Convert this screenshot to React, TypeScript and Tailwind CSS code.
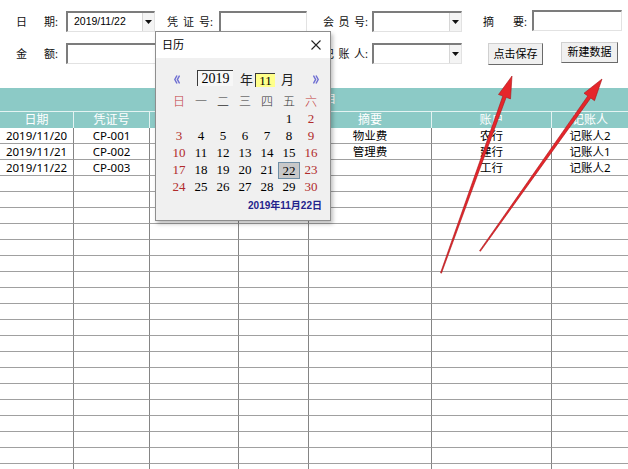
import React from "react";

const COLS = [74, 76, 89, 70, 123, 120, 76];

function Label({ chars, className }: { chars: string[]; className: string }) {
  return (
    <div className={`flex justify-between text-[11px] text-[#111] leading-none ${className}`}>
      {chars.map((c, i) => (
        <span key={i}>{c}</span>
      ))}
    </div>
  );
}

function TextBox({ className, children }: { className: string; children?: React.ReactNode }) {
  return (
    <div
      className={`h-[21px] bg-white border-t-2 border-l-2 border-r border-b border-t-[#7c7c7c] border-l-[#7c7c7c] border-r-[#e2e2e2] border-b-[#e2e2e2] flex items-center ${className}`}
    >
      {children}
    </div>
  );
}

function Combo({ className, value }: { className: string; value?: string }) {
  return (
    <TextBox className={className}>
      <span className="flex-1 pl-[6px] text-[10.5px] text-black font-['Liberation_Sans',sans-serif]">{value}</span>
      <div className="w-[12px] h-full bg-[#f4f4f4] border-l border-[#d6d6d6] flex items-center justify-center">
        <svg width="7" height="4" viewBox="0 0 7 4">
          <path d="M0 0 L7 0 L3.5 4 Z" fill="#111" />
        </svg>
      </div>
    </TextBox>
  );
}

function Button({ label, className }: { label: string; className: string }) {
  return (
    <div
      className={`bg-[#f0f0f0] border border-t-[#d0d0d0] border-l-[#d0d0d0] border-r-[#6a6a6a] border-b-[#6a6a6a] flex items-center justify-center text-[11px] text-black ${className}`}
    >
      {label}
    </div>
  );
}

const rowsData: string[][] = [
  ["2019/11/20", "CP-001", "", "", "物业费", "农行", "记账人2"],
  ["2019/11/21", "CP-002", "", "", "管理费", "建行", "记账人1"],
  ["2019/11/22", "CP-003", "", "", "", "工行", "记账人2"],
];
while (rowsData.length < 22) rowsData.push(["", "", "", "", "", "", ""]);

const headers = ["日期", "凭证号", "金额", "会员号", "摘要", "账户", "记账人"];

const calWeeks: (number | null)[][] = [
  [null, null, null, null, null, 1, 2],
  [3, 4, 5, 6, 7, 8, 9],
  [10, 11, 12, 13, 14, 15, 16],
  [17, 18, 19, 20, 21, 22, 23],
  [24, 25, 26, 27, 28, 29, 30],
];
const weekdays = ["日", "一", "二", "三", "四", "五", "六"];

function Calendar() {
  return (
    <div className="absolute left-[155px] top-[31px] w-[176px] h-[190px] bg-[#f0f0f0] border border-[#8e8e8e] shadow-[2px_3px_4px_rgba(0,0,0,0.25)] flex flex-col">
      <div className="h-[26px] bg-white flex items-center justify-between pl-[6px] pr-[9px]">
        <span className="text-[11px] text-black">日历</span>
        <svg width="10" height="10" viewBox="0 0 10 10">
          <path d="M0.5 0.5 L9.5 9.5 M9.5 0.5 L0.5 9.5" stroke="#222" strokeWidth="1.1" />
        </svg>
      </div>
      <div className="flex-1 pl-[12px] pr-[8px] pt-[11px] flex flex-col">
        <div className="h-[20px] flex items-center">
          <div className="ml-[5px] w-[8px] flex justify-center">
            <svg width="6" height="9" viewBox="0 0 6 9">
              <path d="M3 0.5 L0.8 4.5 L3 8.5 M5.6 0.5 L3.4 4.5 L5.6 8.5" stroke="#6f6fd2" strokeWidth="1.5" fill="none" />
            </svg>
          </div>
          <div className="ml-[16px] w-[36px] h-[16px] -mt-[2px] bg-[#f7f7f7] border-t border-l border-[#3a3a3a] flex items-center justify-center text-[14px] leading-none text-black font-['Liberation_Serif',serif]">
            2019
          </div>
          <span className="ml-[7px] w-[12px] text-[13px] leading-none text-[#222]">年</span>
          <div className="ml-[3px] w-[20px] h-[14px] mt-[2px] bg-[#ffff8a] border-t border-l border-[#3a3a3a] flex items-center justify-center text-[13px] leading-none text-black font-['Liberation_Serif',serif]">
            11
          </div>
          <span className="ml-[6px] w-[12px] text-[13px] leading-none text-[#222]">月</span>
          <div className="ml-[19px] w-[8px] flex justify-center">
            <svg width="6" height="9" viewBox="0 0 6 9">
              <path d="M0.4 0.5 L2.6 4.5 L0.4 8.5 M3 0.5 L5.2 4.5 L3 8.5" stroke="#6f6fd2" strokeWidth="1.5" fill="none" />
            </svg>
          </div>
        </div>
        <div className="mt-[4px] grid grid-cols-[repeat(7,22px)]">
          {weekdays.map((w, i) => (
            <div
              key={w}
              className={`h-[17px] overflow-hidden flex items-center justify-center text-[12px] font-light leading-[12px] ${i === 0 || i === 6 ? "text-[#c23b3b]" : "text-[#333]"}`}
            >
              {w}
            </div>
          ))}
          {calWeeks.flat().map((d, i) => {
            const col = i % 7;
            const red = col === 0 || col === 6;
            const sel = d === 22;
            return (
              <div key={i} className="h-[17px] flex items-center justify-center">
                {d !== null && (
                  <div
                    className={`flex items-center justify-center text-[13px] leading-[13px] font-['Liberation_Serif',serif] ${red ? "text-[#b12b2b]" : "text-black"} ${sel ? "w-[22px] h-[17px] mt-[2px] bg-[#c8c8c8] border border-[#6f8fa6]" : ""}`}
                  >
                    {d}
                  </div>
                )}
              </div>
            );
          })}
        </div>
        <div className="h-[20px] flex items-center justify-end text-[10px] font-bold text-[#23238c] font-['Liberation_Sans','Noto_Sans_CJK_SC',sans-serif]">
          2019年11月22日
        </div>
      </div>
    </div>
  );
}

function Arrows() {
  return (
    <svg className="absolute left-0 top-0 pointer-events-none" width="628" height="469" viewBox="0 0 628 469">
      <polygon
        points="441.47,273.17 506.19,97.31 510.5,98.9 512,76 498.5,94.5 502.81,96.09 440.53,272.83"
        fill="#e5262b"
        stroke="#a81418"
        strokeWidth="0.6"
        strokeLinejoin="round"
      />
      <polygon
        points="480.41,251.29 590.74,97.98 594.5,100.7 602,79 584,93.2 587.8,95.9 479.59,250.71"
        fill="#e5262b"
        stroke="#a81418"
        strokeWidth="0.6"
        strokeLinejoin="round"
      />
    </svg>
  );
}

export default function App() {
  return (
    <div className="relative w-[628px] h-[469px] overflow-hidden bg-white font-['Noto_Sans','Noto_Sans_CJK_SC',sans-serif]">
      {/* Form */}
      <div className="h-[88px] pt-[11px] flex flex-col">
        <div className="h-[21px] flex items-center">
          <Label chars={["日", "期:"]} className="ml-[16px] w-[42px]" />
          <Combo className="ml-[8px] w-[89px]" value="2019/11/22" />
          <Label chars={["凭", "证", "号:"]} className="ml-[12px] w-[46px]" />
          <TextBox className="ml-[6px] w-[88px]" />
          <Label chars={["会", "员", "号:"]} className="ml-[16px] w-[45px]" />
          <Combo className="ml-[4px] w-[90px]" />
          <Label chars={["摘", "要:"]} className="ml-[21px] w-[44px]" />
          <TextBox className="ml-[5px] w-[90px] -mt-[2px]" />
        </div>
        <div className="mt-[11px] h-[21px] flex items-center">
          <Label chars={["金", "额:"]} className="ml-[16px] w-[42px]" />
          <TextBox className="ml-[8px] w-[160px]" />
          <Label chars={["记", "账", "人:"]} className="ml-[97px] w-[45px]" />
          <Combo className="ml-[4px] w-[90px]" />
          <Button label="点击保存" className="ml-[26px] w-[55px] h-[22px] mt-[1px]" />
          <Button label="新建数据" className="ml-[18px] w-[57px] h-[21px] -mt-[2px]" />
        </div>
      </div>
      {/* Table */}
      <div className="bg-[#8ccac6]">
        <div className="h-[24px] flex items-center justify-center border-b border-[#e4f3f2]">
          <span className="text-[11px] text-white">明细项目</span>
        </div>
        <div className="grid grid-cols-[74px_76px_89px_70px_123px_120px_76px] h-[16px]">
          {headers.map((h, i) => (
            <div
              key={h}
              className={`flex items-center justify-center text-[12px] leading-none text-white ${i < 6 ? "border-r border-[#e4f3f2]" : ""}`}
            >
              {h}
            </div>
          ))}
        </div>
      </div>
      <div className="grid grid-cols-[74px_76px_89px_70px_123px_120px_76px]">
        {rowsData.map((r, ri) =>
          r.map((c, ci) => (
            <div
              key={`${ri}-${ci}`}
              className={`h-[16px] border-b border-[#a0a0a0] flex items-center justify-center text-[11.5px] leading-none text-black ${ci < COLS.length - 1 ? "border-r border-r-[#858585]" : ""}`}
            >
              {c}
            </div>
          ))
        )}
      </div>
      <Calendar />
      <Arrows />
    </div>
  );
}
